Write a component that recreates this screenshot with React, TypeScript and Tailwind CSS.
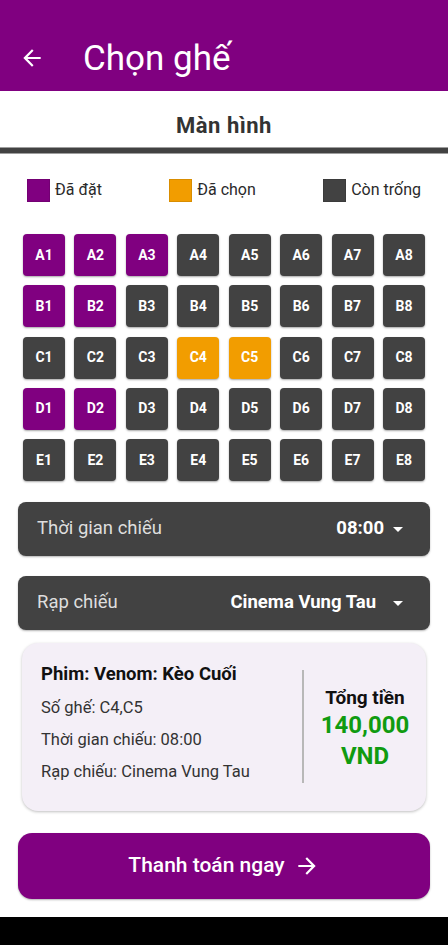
import React from 'react';

type SeatState = 'booked' | 'picked' | 'free';

const ROWS = ['A', 'B', 'C', 'D', 'E'];
const BOOKED = ['A1', 'A2', 'A3', 'B1', 'B2', 'D1', 'D2'];
const PICKED = ['C4', 'C5'];

const seatColor: Record<SeatState, string> = {
  booked: 'bg-[#800080]',
  picked: 'bg-[#f29d00]',
  free: 'bg-[#424242]',
};

const stateOf = (id: string): SeatState =>
  BOOKED.includes(id) ? 'booked' : PICKED.includes(id) ? 'picked' : 'free';

const ArrowBack = ({ size = 26 }: { size?: number }) => (
  <svg width={size} height={size} viewBox="0 0 24 24" fill="white">
    <path d="M20 11H7.83l5.59-5.59L12 4l-8 8 8 8 1.41-1.41L7.83 13H20v-2z" />
  </svg>
);

const ArrowForward = ({ size = 26 }: { size?: number }) => (
  <svg width={size} height={size} viewBox="0 0 24 24" fill="white">
    <path d="M12 4l-1.41 1.41L16.17 11H4v2h12.17l-5.58 5.59L12 20l8-8z" />
  </svg>
);

const DropIcon = () => (
  <svg width={24} height={24} viewBox="0 0 24 24" fill="white">
    <path d="M7 10l5 5 5-5z" />
  </svg>
);

const Legend = ({ color, label }: { color: string; label: string }) => (
  <div className="flex items-center gap-[5px]">
    <div className={`w-[23px] h-[23px] border border-black/10 ${color}`} />
    <span className="text-[16px] text-[#2a2a2a]">{label}</span>
  </div>
);

const Dropdown = ({ label, value, gap }: { label: string; value: string; gap: string }) => (
  <div className="mx-[18px] h-[54px] rounded-[8px] bg-[#424242] shadow-[0_1px_2px_rgba(0,0,0,0.3)] flex items-center pl-[19px] pr-[20px]">
    <span className="text-[18.5px] text-[#dedede] flex-1">{label}</span>
    <span className={`text-[18.5px] font-bold text-white ${gap}`}>{value}</span>
    <DropIcon />
  </div>
);

export default function App() {
  return (
    <div className="h-screen flex flex-col bg-white font-['Roboto',sans-serif]">
      <div className="h-[91px] bg-[#800080] flex items-center pt-[25px] pl-[19px] shrink-0">
        <ArrowBack />
        <h1 className="ml-[38px] text-[35px] text-white leading-none">Chọn ghế</h1>
      </div>

      <div className="h-[56px] flex items-center justify-center pt-[12px] shrink-0">
        <span className="text-[22px] font-bold text-[#333333] tracking-[0.5px]">Màn hình</span>
      </div>
      <div className="h-[7px] bg-[#424242] border-y border-[#9e9e9e] shrink-0" />

      <div className="mt-[24px] px-[27px] flex justify-between">
        <Legend color="bg-[#800080]" label="Đã đặt" />
        <Legend color="bg-[#f29d00]" label="Đã chọn" />
        <Legend color="bg-[#424242]" label="Còn trống" />
      </div>

      <div className="mt-[32px] px-[23px] grid grid-cols-8 gap-x-[9.43px] gap-y-[9.25px]">
        {ROWS.map((r) =>
          Array.from({ length: 8 }, (_, i) => {
            const id = `${r}${i + 1}`;
            return (
              <div
                key={id}
                className={`h-[42px] rounded-[4px] flex items-center justify-center text-[14px] font-bold text-white shadow-[0_1px_2px_rgba(0,0,0,0.35)] ${seatColor[stateOf(id)]}`}
              >
                {id}
              </div>
            );
          })
        )}
      </div>

      <div className="mt-[21px]">
        <Dropdown label="Thời gian chiếu" value="08:00" gap="mr-[2px]" />
      </div>
      <div className="mt-[20px]">
        <Dropdown label="Rạp chiếu" value="Cinema Vung Tau" gap="mr-[10px]" />
      </div>

      <div className="mt-[13px] mx-[22px] h-[168px] rounded-[16px] bg-[#f4eff7] shadow-[0_1px_3px_rgba(0,0,0,0.25)] flex pl-[19px] pt-[20px]">
        <div className="w-[261px] text-[16.5px] text-[#333333]">
          <div className="text-[18.5px] font-bold text-[#111111] leading-[22px]">Phim: Venom: Kèo Cuối</div>
          <div className="mt-[13px] leading-[20px]">Số ghế: C4,C5</div>
          <div className="mt-[12px] leading-[20px]">Thời gian chiếu: 08:00</div>
          <div className="mt-[12px] leading-[20px]">Rạp chiếu: Cinema Vung Tau</div>
        </div>
        <div className="w-[2px] h-[113px] mt-[7px] bg-[#b8b8b8]" />
        <div className="flex-1 h-[113px] mt-[9px] flex flex-col items-center justify-center">
          <span className="text-[19px] font-bold text-[#111111] leading-[24px]">Tổng tiền</span>
          <span className="text-[24px] font-bold text-[#109b10] leading-[31px]">140,000</span>
          <span className="text-[24px] font-bold text-[#109b10] leading-[31px]">VND</span>
        </div>
      </div>

      <div className="mt-[22px] mx-[18px] h-[66px] rounded-[14px] bg-[#800080] shadow-[0_1px_2px_rgba(0,0,0,0.3)] flex items-center justify-center gap-[9px]">
        <span className="text-[21px] font-medium text-white">Thanh toán ngay</span>
        <ArrowForward />
      </div>

      <div className="mt-auto h-[28px] bg-black shrink-0" />
    </div>
  );
}
